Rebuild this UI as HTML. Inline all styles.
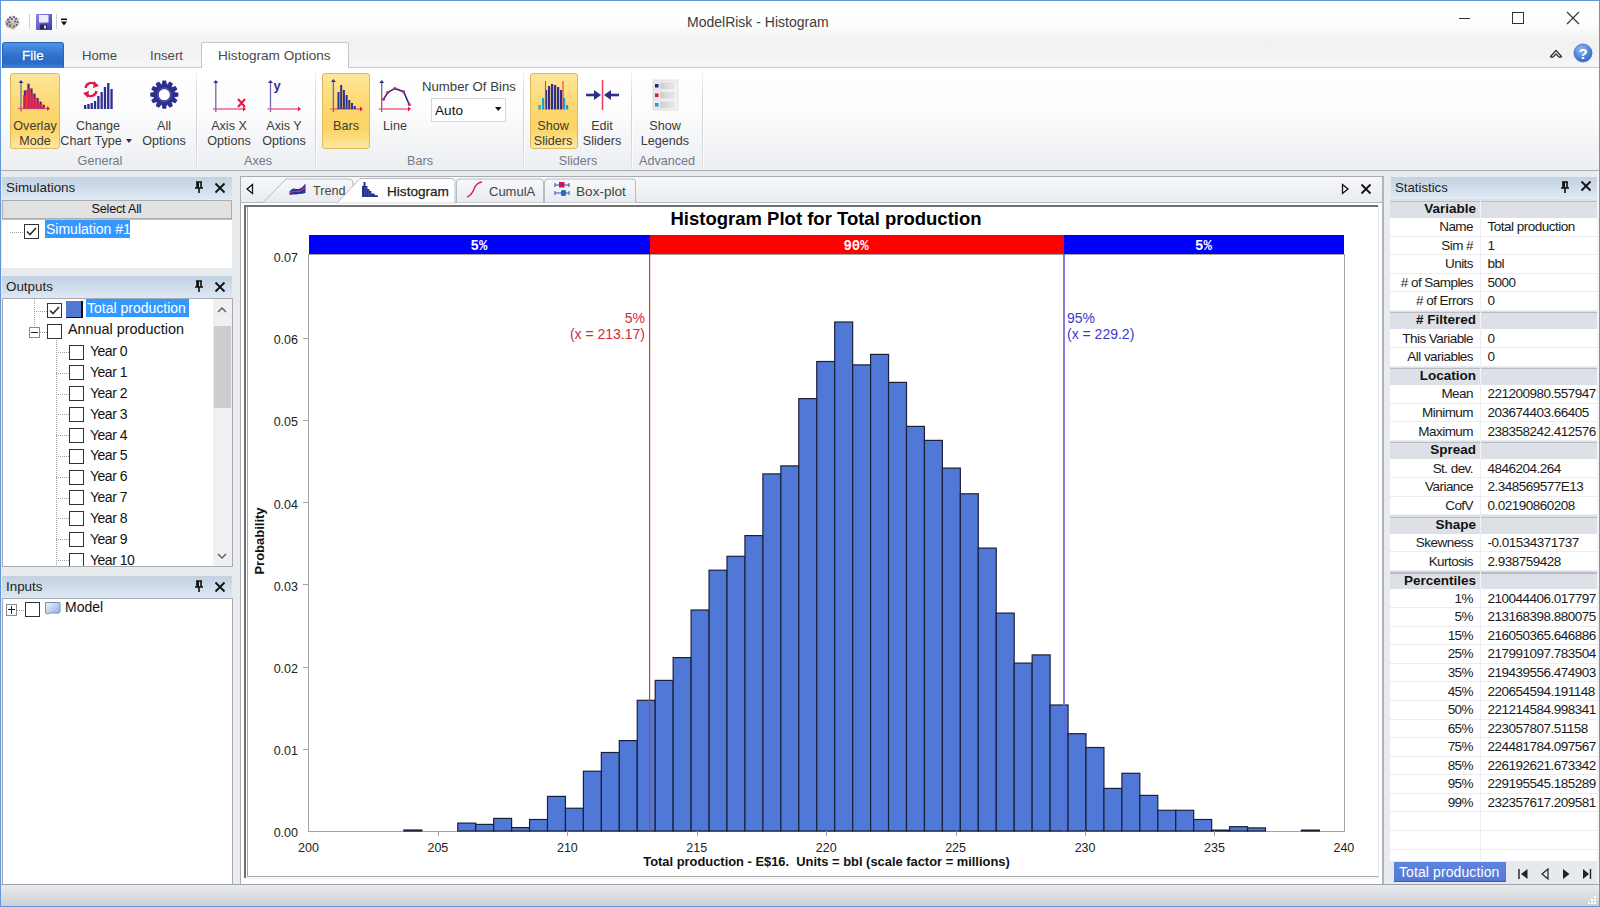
<!DOCTYPE html>
<html><head><meta charset="utf-8"><title>ModelRisk - Histogram</title><style>
*{margin:0;padding:0;box-sizing:border-box}
html,body{width:1600px;height:907px;overflow:hidden;background:#fff;font-family:"Liberation Sans",sans-serif;}
.a{position:absolute}
.t{position:absolute;white-space:nowrap;line-height:1}
</style></head><body>
<div class="a" style="left:0px;top:0px;width:1600px;height:68px;background:linear-gradient(#ffffff 0px,#ffffff 20px,#f1f1f1 44px,#f3f3f3 58px,#f7f7f7 67px)"></div>
<div class="a" style="left:0px;top:68px;width:1600px;height:103px;background:linear-gradient(#ffffff 0px,#fdfdfd 40px,#eceef2 102px)"></div>
<div class="a" style="left:0px;top:67px;width:1600px;height:1px;background:#c6cacf"></div>
<div class="a" style="left:0px;top:170px;width:1600px;height:1px;background:#a9acb1"></div>
<div class="a" style="left:0px;top:171px;width:1600px;height:714px;background:#e9ecef"></div>
<div class="a" style="left:0px;top:884px;width:1600px;height:1px;background:#9ea2a8"></div>
<div class="a" style="left:0px;top:885px;width:1600px;height:21px;background:linear-gradient(#e9ebee,#cdd0d5)"></div>
<div class="a" style="left:0px;top:0px;width:1600px;height:1px;background:#6496da"></div>
<div class="a" style="left:0px;top:0px;width:1px;height:907px;background:#6496da"></div>
<div class="a" style="left:1599px;top:0px;width:1px;height:907px;background:#6496da"></div>
<div class="a" style="left:0px;top:906px;width:1600px;height:1px;background:#6496da"></div>
<div class="t" style="left:687px;top:15px;font-size:14px;color:#3c3c3c">ModelRisk - Histogram</div>
<svg class="a" style="left:3px;top:13px" width="18" height="18" viewBox="0 0 18 18">
<path d="M2 8 L8 2.5 L15.5 5 L16.5 11 L11 16.5 L3.5 14 Z" fill="#c9c5a3"/>
<path d="M8 2.5 L15.5 5 L16.5 11 L9 9 Z" fill="#d9d5b8"/><path d="M2 8 L9 9 L11 16.5 L3.5 14 Z" fill="#b5b190"/>
<g fill="#4a44c8"><circle cx="5" cy="6.5" r="1"/><circle cx="7" cy="4.5" r="1"/><circle cx="9" cy="6" r="1"/><circle cx="11" cy="4" r="1"/><circle cx="13" cy="6" r="1"/><circle cx="12" cy="8.5" r="1"/><circle cx="14.5" cy="9" r="1"/><circle cx="4" cy="11" r="0.9"/><circle cx="7" cy="12.5" r="0.9"/><circle cx="13.5" cy="12" r="0.9"/><circle cx="11" cy="13.5" r="0.9"/><circle cx="6" cy="9" r="0.9"/></g>
</svg>
<div class="a" style="left:29px;top:14px;width:1px;height:15px;background:#d0d0d0"></div>
<svg class="a" style="left:35px;top:13px" width="18" height="18" viewBox="0 0 18 18">
<defs><linearGradient id="sv" x1="0" y1="0" x2="1" y2="1"><stop offset="0" stop-color="#8c86f0"/><stop offset="1" stop-color="#3c36b0"/></linearGradient></defs>
<rect x="1" y="1" width="16" height="16" fill="url(#sv)"/>
<rect x="4" y="2" width="9.5" height="7.5" fill="#eceefa"/>
<rect x="5" y="11.5" width="7" height="5" fill="#27255f"/><rect x="9" y="12.5" width="2" height="3" fill="#dcdcf0"/>
</svg>
<div class="a" style="left:56px;top:14px;width:1px;height:15px;background:#d0d0d0"></div>
<svg class="a" style="left:60px;top:17px" width="8" height="10" viewBox="0 0 8 10">
<rect x="1" y="1.5" width="6" height="1.6" fill="#111"/><path d="M1 4.5 L7 4.5 L4 8.5 Z" fill="#111"/></svg>
<div class="a" style="left:1459px;top:18px;width:11px;height:1px;background:#333"></div>
<div class="a" style="left:1512px;top:12px;width:12px;height:12px;border:1px solid #333"></div>
<svg class="a" style="left:1566px;top:11px" width="14" height="14" viewBox="0 0 14 14">
<path d="M1 1 L13 13 M13 1 L1 13" stroke="#333" stroke-width="1.1"/></svg>
<div class="a" style="left:2px;top:42px;width:62px;height:26px;background:linear-gradient(#4a95e4,#2d6fcc 55%,#2a6bc7 80%,#3a86dc);border-radius:3px 3px 0 0;border:1px solid #2a64b8;border-bottom:none"></div>
<div class="t" style="left:22px;top:49px;font-size:13.4px;color:#fff;-webkit-text-stroke:0.3px #fff;text-shadow:0 0 2px rgba(0,40,120,0.6)">File</div>
<div class="t" style="left:82px;top:49px;font-size:13.2px;color:#4a4a4a">Home</div>
<div class="t" style="left:150px;top:49px;font-size:13.2px;color:#4a4a4a">Insert</div>
<div class="a" style="left:201px;top:42px;width:148px;height:26px;background:linear-gradient(#ffffff,#ffffff);border:1px solid #c3c7cc;border-bottom:none;border-radius:3px 3px 0 0"></div>
<div class="t" style="left:218px;top:49px;font-size:13.6px;color:#4a4a4a">Histogram Options</div>
<svg class="a" style="left:1548px;top:46px" width="16" height="14" viewBox="0 0 16 14">
<path d="M2.5 10.5 L8 4.5 L13.5 10.5 Q12 12 10.5 10.5 L8 8 L5.5 10.5 Q4 12 2.5 10.5 Z" stroke="#333" stroke-width="1.2" fill="none" stroke-linejoin="round"/></svg>
<svg class="a" style="left:1573px;top:43px" width="20" height="20" viewBox="0 0 20 20">
<defs><radialGradient id="hg" cx="40%" cy="30%" r="70%"><stop offset="0" stop-color="#8fbaf0"/><stop offset="1" stop-color="#2c6ccc"/></radialGradient></defs>
<circle cx="10" cy="10" r="9" fill="url(#hg)" stroke="#3a70c0" stroke-width="0.8"/>
<text x="10" y="15.5" text-anchor="middle" font-family="Liberation Sans" font-weight="bold" font-size="15" fill="#fff">?</text></svg>
<div class="a" style="left:196px;top:72px;width:1px;height:97px;background:linear-gradient(rgba(200,203,208,0.2),#d2d5da 30%,#d2d5da 70%,rgba(200,203,208,0.4))"></div>
<div class="a" style="left:197px;top:72px;width:1px;height:97px;background:rgba(255,255,255,0.8)"></div>
<div class="a" style="left:315px;top:72px;width:1px;height:97px;background:linear-gradient(rgba(200,203,208,0.2),#d2d5da 30%,#d2d5da 70%,rgba(200,203,208,0.4))"></div>
<div class="a" style="left:316px;top:72px;width:1px;height:97px;background:rgba(255,255,255,0.8)"></div>
<div class="a" style="left:523px;top:72px;width:1px;height:97px;background:linear-gradient(rgba(200,203,208,0.2),#d2d5da 30%,#d2d5da 70%,rgba(200,203,208,0.4))"></div>
<div class="a" style="left:524px;top:72px;width:1px;height:97px;background:rgba(255,255,255,0.8)"></div>
<div class="a" style="left:631px;top:72px;width:1px;height:97px;background:linear-gradient(rgba(200,203,208,0.2),#d2d5da 30%,#d2d5da 70%,rgba(200,203,208,0.4))"></div>
<div class="a" style="left:632px;top:72px;width:1px;height:97px;background:rgba(255,255,255,0.8)"></div>
<div class="a" style="left:702px;top:72px;width:1px;height:97px;background:linear-gradient(rgba(200,203,208,0.2),#d2d5da 30%,#d2d5da 70%,rgba(200,203,208,0.4))"></div>
<div class="a" style="left:703px;top:72px;width:1px;height:97px;background:rgba(255,255,255,0.8)"></div>
<div class="a" style="left:10px;top:73px;width:50px;height:76px;background:linear-gradient(#fde59a 0%,#fdd870 45%,#fcd466 75%,#fde9a0 100%);border:1px solid #e0b85a;border-radius:3px"></div>
<div class="a" style="left:322px;top:73px;width:48px;height:76px;background:linear-gradient(#fde59a 0%,#fdd870 45%,#fcd466 75%,#fde9a0 100%);border:1px solid #e0b85a;border-radius:3px"></div>
<div class="a" style="left:530px;top:73px;width:48px;height:76px;background:linear-gradient(#fde59a 0%,#fdd870 45%,#fcd466 75%,#fde9a0 100%);border:1px solid #e0b85a;border-radius:3px"></div>
<div class="t" style="left:-25.0px;top:120px;width:120px;text-align:center;font-size:12.6px;color:#3b3b3b">Overlay</div>
<div class="t" style="left:-25.0px;top:135px;width:120px;text-align:center;font-size:12.6px;color:#3b3b3b">Mode</div>
<div class="t" style="left:38.0px;top:120px;width:120px;text-align:center;font-size:12.6px;color:#3b3b3b">Change</div>
<div class="t" style="left:36.0px;top:135px;width:120px;text-align:center;font-size:12.6px;color:#3b3b3b">Chart Type<span style="display:inline-block;width:0;height:0;border-left:3.5px solid transparent;border-right:3.5px solid transparent;border-top:4px solid #333;margin-left:4px;vertical-align:2px"></span></div>
<div class="t" style="left:104.0px;top:120px;width:120px;text-align:center;font-size:12.6px;color:#3b3b3b">All</div>
<div class="t" style="left:104.0px;top:135px;width:120px;text-align:center;font-size:12.6px;color:#3b3b3b">Options</div>
<div class="t" style="left:169.0px;top:120px;width:120px;text-align:center;font-size:12.6px;color:#3b3b3b">Axis X</div>
<div class="t" style="left:169.0px;top:135px;width:120px;text-align:center;font-size:12.6px;color:#3b3b3b">Options</div>
<div class="t" style="left:224.0px;top:120px;width:120px;text-align:center;font-size:12.6px;color:#3b3b3b">Axis Y</div>
<div class="t" style="left:224.0px;top:135px;width:120px;text-align:center;font-size:12.6px;color:#3b3b3b">Options</div>
<div class="t" style="left:286.0px;top:120px;width:120px;text-align:center;font-size:12.6px;color:#3b3b3b">Bars</div>
<div class="t" style="left:335.0px;top:120px;width:120px;text-align:center;font-size:12.6px;color:#3b3b3b">Line</div>
<div class="t" style="left:493.0px;top:120px;width:120px;text-align:center;font-size:12.6px;color:#3b3b3b">Show</div>
<div class="t" style="left:493.0px;top:135px;width:120px;text-align:center;font-size:12.6px;color:#3b3b3b">Sliders</div>
<div class="t" style="left:542.0px;top:120px;width:120px;text-align:center;font-size:12.6px;color:#3b3b3b">Edit</div>
<div class="t" style="left:542.0px;top:135px;width:120px;text-align:center;font-size:12.6px;color:#3b3b3b">Sliders</div>
<div class="t" style="left:605.0px;top:120px;width:120px;text-align:center;font-size:12.6px;color:#3b3b3b">Show</div>
<div class="t" style="left:605.0px;top:135px;width:120px;text-align:center;font-size:12.6px;color:#3b3b3b">Legends</div>
<div class="t" style="left:40.0px;top:155px;width:120px;text-align:center;font-size:12.6px;color:#6e7a88">General</div>
<div class="t" style="left:198.0px;top:155px;width:120px;text-align:center;font-size:12.6px;color:#6e7a88">Axes</div>
<div class="t" style="left:360.0px;top:155px;width:120px;text-align:center;font-size:12.6px;color:#6e7a88">Bars</div>
<div class="t" style="left:518.0px;top:155px;width:120px;text-align:center;font-size:12.6px;color:#6e7a88">Sliders</div>
<div class="t" style="left:607.0px;top:155px;width:120px;text-align:center;font-size:12.6px;color:#6e7a88">Advanced</div>
<div class="t" style="left:422px;top:80px;font-size:13.2px;color:#3b3b3b">Number Of Bins</div>
<div class="a" style="left:431px;top:98px;width:75px;height:24px;background:#fff;border:1px solid #d5d8dc"></div>
<div class="t" style="left:435px;top:103.5px;font-size:13.6px;color:#111">Auto</div>
<svg class="a" style="left:494.5px;top:106.5px" width="7" height="5" viewBox="0 0 7 5"><path d="M0 0 L6.5 0 L3.25 4 Z" fill="#111"/></svg>
<svg class="a" style="left:0;top:0" width="720" height="172" viewBox="0 0 720 172"><path d="M21 111.5 L21 82" stroke="#6a6aa8" stroke-width="1.3"/><path d="M18.5 83 L21 80 L23.5 83 Z" fill="#2e2f8c"/><path d="M18 108.5 L48 108.5" stroke="#f0507a" stroke-width="1.3"/><path d="M47 106.0 L50 108.5 L47 111.0 Z" fill="#e8174a"/><rect x="23.799999999999997" y="90.5" width="2.2" height="18.0" fill="#2e2f8c"/><rect x="27.4" y="83.7" width="2.2" height="24.799999999999997" fill="#2e2f8c"/><rect x="30.4" y="88.5" width="2.2" height="20.0" fill="#2e2f8c"/><rect x="33.4" y="93.7" width="2.2" height="14.799999999999997" fill="#2e2f8c"/><rect x="36.5" y="98" width="2.2" height="10.5" fill="#2e2f8c"/><rect x="39.5" y="101.6" width="2.2" height="6.900000000000006" fill="#2e2f8c"/><rect x="42.699999999999996" y="104.8" width="2.2" height="3.700000000000003" fill="#2e2f8c"/><path d="M23 108.5 L23 95.3 L25.5 95.3 L25.5 90 L27.5 90 L27.5 87.7 L30.5 87.7 L30.5 92.9 L33.5 92.9 L33.5 97.6 L36.5 97.6 L36.5 101.6 L39.5 101.6 L39.5 104 L42.5 104 L42.5 106.2 L45 106.2 L45 108.5 Z" fill="#e8204a" opacity="0.85"/><rect x="84.0" y="105" width="2.3" height="4" fill="#2e2f8c"/><rect x="87.3" y="104" width="2.3" height="5" fill="#2e2f8c"/><rect x="90.6" y="103" width="2.3" height="6" fill="#2e2f8c"/><rect x="93.9" y="101" width="2.3" height="8" fill="#2e2f8c"/><rect x="97.2" y="96" width="2.3" height="13" fill="#2e2f8c"/><rect x="100.5" y="92" width="2.3" height="17" fill="#2e2f8c"/><rect x="103.8" y="87" width="2.3" height="22" fill="#2e2f8c"/><rect x="107.1" y="83" width="2.3" height="26" fill="#2e2f8c"/><rect x="110.4" y="89" width="2.3" height="20" fill="#2e2f8c"/><path d="M85.5 88 A6 6 0 0 1 96 85" stroke="#e8174a" stroke-width="2.4" fill="none"/><path d="M94 81 L99 86 L93 88 Z" fill="#e8174a"/><path d="M96.5 91 A6 6 0 0 1 86 94" stroke="#e8174a" stroke-width="2.4" fill="none"/><path d="M88 98 L83 93 L89 91 Z" fill="#e8174a"/><polygon points="178.38,92.86 178.38,96.54 174.47,97.30 174.41,97.54 177.41,100.15 175.57,103.33 171.81,102.04 171.64,102.21 172.93,105.97 169.75,107.81 167.14,104.81 166.90,104.87 166.14,108.78 162.46,108.78 161.70,104.87 161.46,104.81 158.85,107.81 155.67,105.97 156.96,102.21 156.79,102.04 153.03,103.33 151.19,100.15 154.19,97.54 154.13,97.30 150.22,96.54 150.22,92.86 154.13,92.10 154.19,91.86 151.19,89.25 153.03,86.07 156.79,87.36 156.96,87.19 155.67,83.43 158.85,81.59 161.46,84.59 161.70,84.53 162.46,80.62 166.14,80.62 166.90,84.53 167.14,84.59 169.75,81.59 172.93,83.43 171.64,87.19 171.81,87.36 175.57,86.07 177.41,89.25 174.41,91.86 174.47,92.10" fill="#2e2f8c"/><circle cx="164.3" cy="94.7" r="5.6" fill="#ffffff"/><circle cx="164.3" cy="94.7" r="6.8" fill="none" stroke="#6b6bb5" stroke-width="0.7"/><path d="M215.8 112 L215.8 82" stroke="#6a6aa8" stroke-width="1.3"/><path d="M213.3 83 L215.8 80 L218.3 83 Z" fill="#2e2f8c"/><path d="M212.8 109 L244 109" stroke="#f0507a" stroke-width="1.3"/><path d="M243 106.5 L246 109 L243 111.5 Z" fill="#e8174a"/><path d="M238 99 L245 107 M245 99 L238 107" stroke="#e8174a" stroke-width="2"/><path d="M270.5 112 L270.5 82" stroke="#6a6aa8" stroke-width="1.3"/><path d="M268.0 83 L270.5 80 L273.0 83 Z" fill="#2e2f8c"/><path d="M267.5 109 L299 109" stroke="#f0507a" stroke-width="1.3"/><path d="M298 106.5 L301 109 L298 111.5 Z" fill="#e8174a"/><text x="277" y="90" font-family="Liberation Sans" font-weight="bold" font-size="13" fill="#2e2f8c" text-anchor="middle">y</text><path d="M333.4 112 L333.4 81" stroke="#6a6aa8" stroke-width="1.3"/><path d="M330.9 82 L333.4 79 L335.9 82 Z" fill="#2e2f8c"/><path d="M330.4 109 L361 109" stroke="#f0507a" stroke-width="1.3"/><path d="M360 106.5 L363 109 L360 111.5 Z" fill="#e8174a"/><rect x="337.5" y="92" width="2" height="17" fill="#2e2f8c"/><rect x="340.2" y="85" width="2" height="24" fill="#2e2f8c"/><rect x="342.9" y="90" width="2" height="19" fill="#2e2f8c"/><rect x="345.6" y="95" width="2" height="14" fill="#2e2f8c"/><rect x="348.3" y="100" width="2" height="9" fill="#2e2f8c"/><rect x="351.0" y="103" width="2" height="6" fill="#2e2f8c"/><rect x="353.7" y="106" width="2" height="3" fill="#2e2f8c"/><path d="M381.7 112 L381.7 82" stroke="#6a6aa8" stroke-width="1.3"/><path d="M379.2 83 L381.7 80 L384.2 83 Z" fill="#2e2f8c"/><path d="M378.7 109 L409 109" stroke="#f0507a" stroke-width="1.3"/><path d="M408 106.5 L411 109 L408 111.5 Z" fill="#e8174a"/><path d="M383.5 99.3 L387.7 92.5 L394.9 88.4 L403.6 91.7 L409.3 104.6" stroke="#2e2f8c" stroke-width="1.6" fill="none"/><circle cx="383.5" cy="99.3" r="1.5" fill="#d02060"/><circle cx="387.7" cy="92.5" r="1.5" fill="#d02060"/><circle cx="394.9" cy="88.4" r="1.5" fill="#d02060"/><circle cx="403.6" cy="91.7" r="1.5" fill="#d02060"/><circle cx="409.3" cy="104.6" r="1.5" fill="#d02060"/><rect x="538.5" y="105" width="2.2" height="4.5" fill="#1aa0d8"/><rect x="542" y="98" width="2.2" height="11.5" fill="#1aa0d8"/><rect x="545" y="90" width="2.2" height="19.5" fill="#2e2f8c"/><rect x="548" y="86" width="2.2" height="23.5" fill="#2e2f8c"/><rect x="551" y="84" width="2.2" height="25.5" fill="#2e2f8c"/><rect x="554" y="85" width="2.2" height="24.5" fill="#2e2f8c"/><rect x="557" y="87" width="2.2" height="22.5" fill="#2e2f8c"/><rect x="560" y="90" width="2.2" height="19.5" fill="#2e2f8c"/><rect x="563" y="98" width="2.2" height="11.5" fill="#1aa0d8"/><rect x="566" y="105" width="2.2" height="4.5" fill="#1aa0d8"/><path d="M545.5 81 L545.5 109 M563 81 L563 109" stroke="#ee3a50" stroke-width="1.1"/><path d="M602.5 80 L602.5 110" stroke="#ee3a6a" stroke-width="1.5"/><path d="M586 95 L597 95" stroke="#2e2f8c" stroke-width="2.6"/><path d="M594 90 L601 95 L594 100 Z" fill="#2e2f8c"/><path d="M619 95 L608 95" stroke="#2e2f8c" stroke-width="2.6"/><path d="M611 90 L604 95 L611 100 Z" fill="#2e2f8c"/><defs><linearGradient id="lg1" x1="0" x2="1"><stop offset="0" stop-color="#e6e6e6"/><stop offset="1" stop-color="#f4f4f4"/></linearGradient><linearGradient id="lg2" x1="0" x2="1"><stop offset="0" stop-color="#cfcfcf"/><stop offset="1" stop-color="#e8e8e8"/></linearGradient></defs><rect x="653" y="80" width="25" height="30" fill="url(#lg1)" stroke="#dadada" stroke-width="0.8"/><rect x="655" y="84.0" width="3.5" height="3.5" fill="#23237a"/><rect x="660" y="82.5" width="15" height="6.5" fill="url(#lg2)"/><rect x="655" y="93.5" width="3.5" height="3.5" fill="#e0104a"/><rect x="660" y="92.0" width="15" height="6.5" fill="url(#lg2)"/><rect x="655" y="103.0" width="3.5" height="3.5" fill="#18a0e0"/><rect x="660" y="101.5" width="15" height="6.5" fill="url(#lg2)"/></svg>
<div class="a" style="left:2px;top:177px;width:230px;height:22px;background:linear-gradient(#c3d1e1 0%,#cfdcea 50%,#dde8f5 100%)"></div>
<div class="t" style="left:6px;top:180.5px;font-size:13.4px;color:#1e1e1e">Simulations</div>
<svg class="a" style="left:192px;top:180px" width="14" height="14" viewBox="0 0 14 14">
<path d="M4 2 L10 2 M5 2 L5 8 M9 2 L9 8 M3 8 L11 8 M7 8 L7 13" stroke="#111" stroke-width="1.6" fill="none"/><rect x="5" y="2" width="2" height="6" fill="#111"/></svg>
<svg class="a" style="left:214px;top:182px" width="12" height="12" viewBox="0 0 12 12">
<path d="M1.5 1.5 L10.5 10.5 M10.5 1.5 L1.5 10.5" stroke="#111" stroke-width="1.8"/></svg>
<div class="a" style="left:2px;top:200px;width:230px;height:19px;background:#e1e1e1;border:1px solid #adadad"></div>
<div class="t" style="left:2px;top:203px;font-size:12.6px;color:#111;letter-spacing:-0.2px"><span style="display:inline-block;width:229px;text-align:center">Select All</span></div>
<div class="a" style="left:2px;top:219px;width:230px;height:1px;background:#bfc3c8"></div>
<div class="a" style="left:2px;top:220px;width:230px;height:48px;background:#fff"></div>
<div class="a" style="left:10px;top:232px;width:14px;height:1px;background:repeating-linear-gradient(90deg,#a0a0a0 0 1px,transparent 1px 2px)"></div>
<div class="a" style="left:24px;top:224px;width:15px;height:15px;background:#fff;border:1px solid #333"></div>
<svg class="a" style="left:24px;top:224px" width="15" height="15" viewBox="0 0 15 15">
<path d="M3 7.5 L6 10.5 L12 4" stroke="#333" stroke-width="1.7" fill="none"/></svg>
<div class="a" style="left:45px;top:220px;width:85px;height:18px;background:#3399ff"></div>
<div class="t" style="left:46px;top:222px;font-size:14px;color:#fff">Simulation #1</div>
<div class="a" style="left:2px;top:276px;width:230px;height:22px;background:linear-gradient(#c3d1e1 0%,#cfdcea 50%,#dde8f5 100%)"></div>
<div class="t" style="left:6px;top:279.5px;font-size:13.4px;color:#1e1e1e">Outputs</div>
<svg class="a" style="left:192px;top:279px" width="14" height="14" viewBox="0 0 14 14">
<path d="M4 2 L10 2 M5 2 L5 8 M9 2 L9 8 M3 8 L11 8 M7 8 L7 13" stroke="#111" stroke-width="1.6" fill="none"/><rect x="5" y="2" width="2" height="6" fill="#111"/></svg>
<svg class="a" style="left:214px;top:281px" width="12" height="12" viewBox="0 0 12 12">
<path d="M1.5 1.5 L10.5 10.5 M10.5 1.5 L1.5 10.5" stroke="#111" stroke-width="1.8"/></svg>
<div class="a" style="left:2px;top:298px;width:231px;height:269px;background:#fff;border:1px solid #a7abb0"></div>
<div class="a" style="left:213px;top:299px;width:19px;height:267px;background:#f0f0f0"></div>
<div class="a" style="left:214px;top:326px;width:17px;height:82px;background:#cdcdcd"></div>
<svg class="a" style="left:216px;top:305px" width="12" height="10" viewBox="0 0 12 10"><path d="M2 7 L6 3 L10 7" stroke="#606060" stroke-width="1.5" fill="none"/></svg>
<svg class="a" style="left:216px;top:551px" width="12" height="10" viewBox="0 0 12 10"><path d="M2 3 L6 7 L10 3" stroke="#606060" stroke-width="1.5" fill="none"/></svg>
<div class="a" style="left:34px;top:299px;width:1px;height:29px;background:repeating-linear-gradient(180deg,#a0a0a0 0 1px,transparent 1px 2px)"></div>
<div class="a" style="left:34px;top:311px;width:13px;height:1px;background:repeating-linear-gradient(90deg,#a0a0a0 0 1px,transparent 1px 2px)"></div>
<div class="a" style="left:47px;top:303px;width:15px;height:15px;background:#fff;border:1px solid #333"></div>
<svg class="a" style="left:47px;top:303px" width="15" height="15" viewBox="0 0 15 15">
<path d="M3 7.5 L6 10.5 L12 4" stroke="#333" stroke-width="1.7" fill="none"/></svg>
<div class="a" style="left:66px;top:301px;width:17px;height:17px;background:#5277d4;border-right:2px solid #111;border-bottom:1px solid #111"></div>
<div class="a" style="left:86px;top:299px;width:103px;height:18px;background:#3399ff"></div>
<div class="t" style="left:87px;top:301px;font-size:14px;color:#fff">Total production</div>
<div class="a" style="left:29px;top:327px;width:11px;height:11px;background:#fff;border:1px solid #8a8a8a"></div>
<div class="a" style="left:31px;top:332px;width:7px;height:1px;background:#222"></div>
<div class="a" style="left:40px;top:332px;width:7px;height:1px;background:repeating-linear-gradient(90deg,#a0a0a0 0 1px,transparent 1px 2px)"></div>
<div class="a" style="left:47px;top:324px;width:15px;height:15px;background:#fff;border:1px solid #333"></div>
<div class="t" style="left:68px;top:322px;font-size:14.4px;color:#111">Annual production</div>
<div class="a" style="left:56px;top:340px;width:1px;height:226px;background:repeating-linear-gradient(180deg,#a0a0a0 0 1px,transparent 1px 2px)"></div>
<div class="a" style="left:56px;top:352px;width:13px;height:1px;background:repeating-linear-gradient(90deg,#a0a0a0 0 1px,transparent 1px 2px)"></div>
<div class="a" style="left:69px;top:345px;width:15px;height:15px;background:#fff;border:1px solid #333"></div>
<div class="t" style="left:90px;top:344px;font-size:14px;color:#111;letter-spacing:-0.5px">Year 0</div>
<div class="a" style="left:56px;top:373px;width:13px;height:1px;background:repeating-linear-gradient(90deg,#a0a0a0 0 1px,transparent 1px 2px)"></div>
<div class="a" style="left:69px;top:365px;width:15px;height:15px;background:#fff;border:1px solid #333"></div>
<div class="t" style="left:90px;top:365px;font-size:14px;color:#111;letter-spacing:-0.5px">Year 1</div>
<div class="a" style="left:56px;top:394px;width:13px;height:1px;background:repeating-linear-gradient(90deg,#a0a0a0 0 1px,transparent 1px 2px)"></div>
<div class="a" style="left:69px;top:386px;width:15px;height:15px;background:#fff;border:1px solid #333"></div>
<div class="t" style="left:90px;top:386px;font-size:14px;color:#111;letter-spacing:-0.5px">Year 2</div>
<div class="a" style="left:56px;top:414px;width:13px;height:1px;background:repeating-linear-gradient(90deg,#a0a0a0 0 1px,transparent 1px 2px)"></div>
<div class="a" style="left:69px;top:407px;width:15px;height:15px;background:#fff;border:1px solid #333"></div>
<div class="t" style="left:90px;top:407px;font-size:14px;color:#111;letter-spacing:-0.5px">Year 3</div>
<div class="a" style="left:56px;top:435px;width:13px;height:1px;background:repeating-linear-gradient(90deg,#a0a0a0 0 1px,transparent 1px 2px)"></div>
<div class="a" style="left:69px;top:428px;width:15px;height:15px;background:#fff;border:1px solid #333"></div>
<div class="t" style="left:90px;top:428px;font-size:14px;color:#111;letter-spacing:-0.5px">Year 4</div>
<div class="a" style="left:56px;top:456px;width:13px;height:1px;background:repeating-linear-gradient(90deg,#a0a0a0 0 1px,transparent 1px 2px)"></div>
<div class="a" style="left:69px;top:449px;width:15px;height:15px;background:#fff;border:1px solid #333"></div>
<div class="t" style="left:90px;top:448px;font-size:14px;color:#111;letter-spacing:-0.5px">Year 5</div>
<div class="a" style="left:56px;top:477px;width:13px;height:1px;background:repeating-linear-gradient(90deg,#a0a0a0 0 1px,transparent 1px 2px)"></div>
<div class="a" style="left:69px;top:470px;width:15px;height:15px;background:#fff;border:1px solid #333"></div>
<div class="t" style="left:90px;top:469px;font-size:14px;color:#111;letter-spacing:-0.5px">Year 6</div>
<div class="a" style="left:56px;top:498px;width:13px;height:1px;background:repeating-linear-gradient(90deg,#a0a0a0 0 1px,transparent 1px 2px)"></div>
<div class="a" style="left:69px;top:490px;width:15px;height:15px;background:#fff;border:1px solid #333"></div>
<div class="t" style="left:90px;top:490px;font-size:14px;color:#111;letter-spacing:-0.5px">Year 7</div>
<div class="a" style="left:56px;top:518px;width:13px;height:1px;background:repeating-linear-gradient(90deg,#a0a0a0 0 1px,transparent 1px 2px)"></div>
<div class="a" style="left:69px;top:511px;width:15px;height:15px;background:#fff;border:1px solid #333"></div>
<div class="t" style="left:90px;top:511px;font-size:14px;color:#111;letter-spacing:-0.5px">Year 8</div>
<div class="a" style="left:56px;top:539px;width:13px;height:1px;background:repeating-linear-gradient(90deg,#a0a0a0 0 1px,transparent 1px 2px)"></div>
<div class="a" style="left:69px;top:532px;width:15px;height:15px;background:#fff;border:1px solid #333"></div>
<div class="t" style="left:90px;top:532px;font-size:14px;color:#111;letter-spacing:-0.5px">Year 9</div>
<div class="a" style="left:56px;top:560px;width:13px;height:1px;background:repeating-linear-gradient(90deg,#a0a0a0 0 1px,transparent 1px 2px)"></div>
<div class="a" style="left:69px;top:553px;width:15px;height:13px;background:#fff;border:1px solid #333;border-bottom:none"></div>
<div class="t" style="left:90px;top:553px;font-size:14px;color:#111;letter-spacing:-0.5px">Year 10</div>
<div class="a" style="left:3px;top:566px;width:229px;height:1px;background:#a7abb0"></div>
<div class="a" style="left:2px;top:576px;width:230px;height:22px;background:linear-gradient(#c3d1e1 0%,#cfdcea 50%,#dde8f5 100%)"></div>
<div class="t" style="left:6px;top:579.5px;font-size:13.4px;color:#1e1e1e">Inputs</div>
<svg class="a" style="left:192px;top:579px" width="14" height="14" viewBox="0 0 14 14">
<path d="M4 2 L10 2 M5 2 L5 8 M9 2 L9 8 M3 8 L11 8 M7 8 L7 13" stroke="#111" stroke-width="1.6" fill="none"/><rect x="5" y="2" width="2" height="6" fill="#111"/></svg>
<svg class="a" style="left:214px;top:581px" width="12" height="12" viewBox="0 0 12 12">
<path d="M1.5 1.5 L10.5 10.5 M10.5 1.5 L1.5 10.5" stroke="#111" stroke-width="1.8"/></svg>
<div class="a" style="left:2px;top:598px;width:231px;height:286px;background:#fff;border:1px solid #a7abb0;border-bottom:none"></div>
<div class="a" style="left:6px;top:604px;width:11px;height:12px;background:#fff;border:1px solid #8a8a8a"></div>
<div class="a" style="left:8px;top:609px;width:7px;height:1px;background:#222"></div>
<div class="a" style="left:11px;top:606px;width:1px;height:8px;background:#222"></div>
<div class="a" style="left:17px;top:610px;width:8px;height:1px;background:repeating-linear-gradient(90deg,#a0a0a0 0 1px,transparent 1px 2px)"></div>
<div class="a" style="left:25px;top:602px;width:15px;height:15px;background:#fff;border:1px solid #333"></div>
<svg class="a" style="left:44px;top:601px" width="18" height="16" viewBox="0 0 18 16">
<defs><linearGradient id="mg" x1="0" y1="0" x2="1" y2="1"><stop offset="0" stop-color="#eef4fb"/><stop offset="1" stop-color="#8fb0d8"/></linearGradient></defs>
<path d="M1.5 1.5 L16 1.5 L16 11 Q14 13 12 12 L6 12 Q4 14 1.5 12 Z" fill="url(#mg)" stroke="#6f93c4" stroke-width="1"/></svg>
<div class="t" style="left:65px;top:600px;font-size:14px;color:#111">Model</div>
<div class="a" style="left:240px;top:176px;width:1144px;height:708px;background:#fff;border:1px solid #a9adb3;border-right:2px solid #b1b4b9;border-bottom:none"></div>
<div class="a" style="left:241px;top:177px;width:1141px;height:25px;background:linear-gradient(#f6f7f9,#e9ecf0)"></div>
<div class="a" style="left:241px;top:202px;width:1141px;height:1px;background:#b4b8be"></div>
<svg class="a" style="left:245px;top:183px" width="10" height="12" viewBox="0 0 10 12"><path d="M7.5 1.5 L2 6 L7.5 10.5 Z" fill="none" stroke="#111" stroke-width="1.3"/></svg>
<svg class="a" style="left:1340px;top:183px" width="10" height="12" viewBox="0 0 10 12"><path d="M2.5 1.5 L8 6 L2.5 10.5 Z" fill="none" stroke="#111" stroke-width="1.3"/></svg>
<svg class="a" style="left:1360px;top:183px" width="12" height="12" viewBox="0 0 12 12"><path d="M1.5 1.5 L10.5 10.5 M10.5 1.5 L1.5 10.5" stroke="#111" stroke-width="1.8"/></svg>
<svg class="a" style="left:240px;top:176px" width="420" height="28" viewBox="240 176 420 28"><defs><linearGradient id="tg" x1="0" y1="0" x2="0" y2="1"><stop offset="0" stop-color="#f7f8fa"/><stop offset="1" stop-color="#e8ebef"/></linearGradient></defs><path d="M544.5 202.5 L544.5 182 Q544.5 179 548 179 L632 179 Q635.5 179 635.5 182 L635.5 202.5" fill="url(#tg)" stroke="#b8bcc2"/><path d="M456.5 202.5 L456.5 182 Q456.5 179 460 179 L540 179 Q543.5 179 543.5 182 L543.5 202.5" fill="url(#tg)" stroke="#b8bcc2"/><path d="M263 202.5 L286 179 L349 179 Q353 179 353 183 L353 202.5" fill="url(#tg)" stroke="#b8bcc2"/><path d="M337 203 L360 178.5 L451 178.5 Q455 178.5 455 182 L455 203 Z" fill="#ffffff" stroke="#b8bcc2"/><path d="M338 203 L454.5 203" stroke="#ffffff" stroke-width="1.2"/><path d="M289.5 191.5 Q292 188 294.5 188.5 Q297 189.5 300 188.5 Q303 187 305.5 183.5 L305.5 193 Q302 194 299 194 Q296 194.5 293 194.5 Q291 194.5 289.5 195 Z" fill="#26359a"/><path d="M290 193 Q293 190.5 296 191.5 Q300 192 305 187.5" stroke="#c8347a" stroke-width="1.1" fill="none"/><path d="M362 197 L362 186 L363.5 186 L363.5 182 L365.5 182 L365.5 186 L367.5 186 L367.5 189 L369.5 189 L369.5 191 L371.5 191 L371.5 193.5 L374.5 193.5 L374.5 195 L378 195.5 L378 197 Z" fill="#24308f"/><path d="M364.5 187 L364.5 197 M366.5 187 L366.5 197 M368.5 190 L368.5 197 M370.5 192 L370.5 197" stroke="#5a64b0" stroke-width="0.5"/><path d="M467 197 Q472 195 474 189 Q476 183 482 182" stroke="#e02050" stroke-width="1.4" fill="none"/><rect x="559" y="182" width="5.5" height="5.5" fill="#e0104a"/><path d="M555 185 L569 185 M555 193 L569 193" stroke="#3a4aa8" stroke-width="1"/><rect x="561" y="190" width="5" height="6" rx="1.5" fill="#1a6fc0"/><path d="M555 183 L555 187 M569 183 L569 187 M555 191 L555 195 M569 191 L569 195" stroke="#3a4aa8" stroke-width="1"/></svg>
<div class="t" style="left:313px;top:185px;font-size:12.6px;color:#444">Trend</div>
<div class="t" style="left:387px;top:185px;font-size:13.6px;color:#222;font-weight:normal;-webkit-text-stroke:0.25px #222">Histogram</div>
<div class="t" style="left:489px;top:185px;font-size:13px;color:#444">CumulA</div>
<div class="t" style="left:576px;top:185px;font-size:13.6px;color:#444">Box-plot</div>
<div class="a" style="left:244px;top:205px;width:1134px;height:2px;background:#707070"></div>
<div class="a" style="left:244px;top:205px;width:2px;height:673px;background:#707070"></div>
<div class="a" style="left:247px;top:207px;width:1px;height:669px;background:#a4a4a4"></div>
<div class="a" style="left:247px;top:876px;width:1131px;height:1px;background:#a4a4a4"></div>
<div class="a" style="left:245px;top:878px;width:1134px;height:1px;background:#ececec"></div>
<div class="a" style="left:1378px;top:205px;width:1px;height:674px;background:#e6e6e6"></div>
<div class="a" style="left:1391px;top:177px;width:206px;height:21px;background:linear-gradient(#c3d1e1 0%,#cfdcea 50%,#dde8f5 100%)"></div>
<div class="t" style="left:1395px;top:181px;font-size:13.2px;color:#1e1e1e">Statistics</div>
<svg class="a" style="left:1558px;top:180px" width="14" height="14" viewBox="0 0 14 14">
<path d="M4 2 L10 2 M5 2 L5 8 M9 2 L9 8 M3 8 L11 8 M7 8 L7 13" stroke="#111" stroke-width="1.6" fill="none"/><rect x="5" y="2" width="2" height="6" fill="#111"/></svg>
<svg class="a" style="left:1580px;top:180px" width="12" height="12" viewBox="0 0 12 12">
<path d="M1.5 1.5 L10.5 10.5 M10.5 1.5 L1.5 10.5" stroke="#111" stroke-width="1.8"/></svg>
<div class="a" style="left:1597px;top:171px;width:2px;height:714px;background:#f2f3f5"></div>
<div class="a" style="left:1390px;top:199px;width:207px;height:662px;background:#fff"></div>
<div class="a" style="left:1390px;top:199.40px;width:207px;height:18.58px;background:#dde1e7"></div><div class="a" style="left:1390px;top:200.80px;width:207px;height:1.2px;background:#b9bec6"></div><div class="t" style="left:1390px;top:202.00px;width:86px;text-align:right;font-size:13.5px;font-weight:bold;color:#111">Variable</div><div class="a" style="left:1390px;top:235.55px;width:207px;height:1px;background:#ebedf0"></div><div class="t" style="left:1390px;top:220.18px;width:83px;text-align:right;font-size:13.5px;letter-spacing:-0.55px;color:#1a1a1a">Name</div><div class="t" style="left:1487.5px;top:220.18px;font-size:13.5px;letter-spacing:-0.5px;color:#1a1a1a">Total production</div><div class="a" style="left:1390px;top:254.13px;width:207px;height:1px;background:#ebedf0"></div><div class="t" style="left:1390px;top:238.75px;width:83px;text-align:right;font-size:13.5px;letter-spacing:-0.55px;color:#1a1a1a">Sim #</div><div class="t" style="left:1487.5px;top:238.75px;font-size:13.5px;letter-spacing:-0.5px;color:#1a1a1a">1</div><div class="a" style="left:1390px;top:272.70px;width:207px;height:1px;background:#ebedf0"></div><div class="t" style="left:1390px;top:257.33px;width:83px;text-align:right;font-size:13.5px;letter-spacing:-0.55px;color:#1a1a1a">Units</div><div class="t" style="left:1487.5px;top:257.33px;font-size:13.5px;letter-spacing:-0.5px;color:#1a1a1a">bbl</div><div class="a" style="left:1390px;top:291.28px;width:207px;height:1px;background:#ebedf0"></div><div class="t" style="left:1390px;top:275.90px;width:83px;text-align:right;font-size:13.5px;letter-spacing:-0.55px;color:#1a1a1a"># of Samples</div><div class="t" style="left:1487.5px;top:275.90px;font-size:13.5px;letter-spacing:-0.5px;color:#1a1a1a">5000</div><div class="a" style="left:1390px;top:309.86px;width:207px;height:1px;background:#ebedf0"></div><div class="t" style="left:1390px;top:294.48px;width:83px;text-align:right;font-size:13.5px;letter-spacing:-0.55px;color:#1a1a1a"># of Errors</div><div class="t" style="left:1487.5px;top:294.48px;font-size:13.5px;letter-spacing:-0.5px;color:#1a1a1a">0</div><div class="a" style="left:1390px;top:310.86px;width:207px;height:18.58px;background:#dde1e7"></div><div class="a" style="left:1390px;top:312.26px;width:207px;height:1.2px;background:#b9bec6"></div><div class="t" style="left:1390px;top:313.46px;width:86px;text-align:right;font-size:13.5px;font-weight:bold;color:#111"># Filtered</div><div class="a" style="left:1390px;top:347.01px;width:207px;height:1px;background:#ebedf0"></div><div class="t" style="left:1390px;top:331.63px;width:83px;text-align:right;font-size:13.5px;letter-spacing:-0.55px;color:#1a1a1a">This Variable</div><div class="t" style="left:1487.5px;top:331.63px;font-size:13.5px;letter-spacing:-0.5px;color:#1a1a1a">0</div><div class="a" style="left:1390px;top:365.58px;width:207px;height:1px;background:#ebedf0"></div><div class="t" style="left:1390px;top:350.21px;width:83px;text-align:right;font-size:13.5px;letter-spacing:-0.55px;color:#1a1a1a">All variables</div><div class="t" style="left:1487.5px;top:350.21px;font-size:13.5px;letter-spacing:-0.5px;color:#1a1a1a">0</div><div class="a" style="left:1390px;top:366.58px;width:207px;height:18.58px;background:#dde1e7"></div><div class="a" style="left:1390px;top:367.98px;width:207px;height:1.2px;background:#b9bec6"></div><div class="t" style="left:1390px;top:369.18px;width:86px;text-align:right;font-size:13.5px;font-weight:bold;color:#111">Location</div><div class="a" style="left:1390px;top:402.74px;width:207px;height:1px;background:#ebedf0"></div><div class="t" style="left:1390px;top:387.36px;width:83px;text-align:right;font-size:13.5px;letter-spacing:-0.55px;color:#1a1a1a">Mean</div><div class="t" style="left:1487.5px;top:387.36px;font-size:13.5px;letter-spacing:-0.5px;color:#1a1a1a">221200980.557947</div><div class="a" style="left:1390px;top:421.31px;width:207px;height:1px;background:#ebedf0"></div><div class="t" style="left:1390px;top:405.94px;width:83px;text-align:right;font-size:13.5px;letter-spacing:-0.55px;color:#1a1a1a">Minimum</div><div class="t" style="left:1487.5px;top:405.94px;font-size:13.5px;letter-spacing:-0.5px;color:#1a1a1a">203674403.66405</div><div class="a" style="left:1390px;top:439.89px;width:207px;height:1px;background:#ebedf0"></div><div class="t" style="left:1390px;top:424.51px;width:83px;text-align:right;font-size:13.5px;letter-spacing:-0.55px;color:#1a1a1a">Maximum</div><div class="t" style="left:1487.5px;top:424.51px;font-size:13.5px;letter-spacing:-0.5px;color:#1a1a1a">238358242.412576</div><div class="a" style="left:1390px;top:440.89px;width:207px;height:18.58px;background:#dde1e7"></div><div class="a" style="left:1390px;top:442.29px;width:207px;height:1.2px;background:#b9bec6"></div><div class="t" style="left:1390px;top:443.49px;width:86px;text-align:right;font-size:13.5px;font-weight:bold;color:#111">Spread</div><div class="a" style="left:1390px;top:477.04px;width:207px;height:1px;background:#ebedf0"></div><div class="t" style="left:1390px;top:461.66px;width:83px;text-align:right;font-size:13.5px;letter-spacing:-0.55px;color:#1a1a1a">St. dev.</div><div class="t" style="left:1487.5px;top:461.66px;font-size:13.5px;letter-spacing:-0.5px;color:#1a1a1a">4846204.264</div><div class="a" style="left:1390px;top:495.62px;width:207px;height:1px;background:#ebedf0"></div><div class="t" style="left:1390px;top:480.24px;width:83px;text-align:right;font-size:13.5px;letter-spacing:-0.55px;color:#1a1a1a">Variance</div><div class="t" style="left:1487.5px;top:480.24px;font-size:13.5px;letter-spacing:-0.5px;color:#1a1a1a">2.348569577E13</div><div class="a" style="left:1390px;top:514.19px;width:207px;height:1px;background:#ebedf0"></div><div class="t" style="left:1390px;top:498.82px;width:83px;text-align:right;font-size:13.5px;letter-spacing:-0.55px;color:#1a1a1a">CofV</div><div class="t" style="left:1487.5px;top:498.82px;font-size:13.5px;letter-spacing:-0.5px;color:#1a1a1a">0.02190860208</div><div class="a" style="left:1390px;top:515.19px;width:207px;height:18.58px;background:#dde1e7"></div><div class="a" style="left:1390px;top:516.59px;width:207px;height:1.2px;background:#b9bec6"></div><div class="t" style="left:1390px;top:517.79px;width:86px;text-align:right;font-size:13.5px;font-weight:bold;color:#111">Shape</div><div class="a" style="left:1390px;top:551.34px;width:207px;height:1px;background:#ebedf0"></div><div class="t" style="left:1390px;top:535.97px;width:83px;text-align:right;font-size:13.5px;letter-spacing:-0.55px;color:#1a1a1a">Skewness</div><div class="t" style="left:1487.5px;top:535.97px;font-size:13.5px;letter-spacing:-0.5px;color:#1a1a1a">-0.01534371737</div><div class="a" style="left:1390px;top:569.92px;width:207px;height:1px;background:#ebedf0"></div><div class="t" style="left:1390px;top:554.54px;width:83px;text-align:right;font-size:13.5px;letter-spacing:-0.55px;color:#1a1a1a">Kurtosis</div><div class="t" style="left:1487.5px;top:554.54px;font-size:13.5px;letter-spacing:-0.5px;color:#1a1a1a">2.938759428</div><div class="a" style="left:1390px;top:570.92px;width:207px;height:18.58px;background:#dde1e7"></div><div class="a" style="left:1390px;top:572.32px;width:207px;height:1.2px;background:#b9bec6"></div><div class="t" style="left:1390px;top:573.52px;width:86px;text-align:right;font-size:13.5px;font-weight:bold;color:#111">Percentiles</div><div class="a" style="left:1390px;top:607.07px;width:207px;height:1px;background:#ebedf0"></div><div class="t" style="left:1390px;top:591.70px;width:83px;text-align:right;font-size:13.5px;letter-spacing:-0.55px;color:#1a1a1a">1%</div><div class="t" style="left:1487.5px;top:591.70px;font-size:13.5px;letter-spacing:-0.5px;color:#1a1a1a">210044406.017797</div><div class="a" style="left:1390px;top:625.65px;width:207px;height:1px;background:#ebedf0"></div><div class="t" style="left:1390px;top:610.27px;width:83px;text-align:right;font-size:13.5px;letter-spacing:-0.55px;color:#1a1a1a">5%</div><div class="t" style="left:1487.5px;top:610.27px;font-size:13.5px;letter-spacing:-0.5px;color:#1a1a1a">213168398.880075</div><div class="a" style="left:1390px;top:644.22px;width:207px;height:1px;background:#ebedf0"></div><div class="t" style="left:1390px;top:628.85px;width:83px;text-align:right;font-size:13.5px;letter-spacing:-0.55px;color:#1a1a1a">15%</div><div class="t" style="left:1487.5px;top:628.85px;font-size:13.5px;letter-spacing:-0.5px;color:#1a1a1a">216050365.646886</div><div class="a" style="left:1390px;top:662.80px;width:207px;height:1px;background:#ebedf0"></div><div class="t" style="left:1390px;top:647.42px;width:83px;text-align:right;font-size:13.5px;letter-spacing:-0.55px;color:#1a1a1a">25%</div><div class="t" style="left:1487.5px;top:647.42px;font-size:13.5px;letter-spacing:-0.5px;color:#1a1a1a">217991097.783504</div><div class="a" style="left:1390px;top:681.38px;width:207px;height:1px;background:#ebedf0"></div><div class="t" style="left:1390px;top:666.00px;width:83px;text-align:right;font-size:13.5px;letter-spacing:-0.55px;color:#1a1a1a">35%</div><div class="t" style="left:1487.5px;top:666.00px;font-size:13.5px;letter-spacing:-0.5px;color:#1a1a1a">219439556.474903</div><div class="a" style="left:1390px;top:699.95px;width:207px;height:1px;background:#ebedf0"></div><div class="t" style="left:1390px;top:684.58px;width:83px;text-align:right;font-size:13.5px;letter-spacing:-0.55px;color:#1a1a1a">45%</div><div class="t" style="left:1487.5px;top:684.58px;font-size:13.5px;letter-spacing:-0.5px;color:#1a1a1a">220654594.191148</div><div class="a" style="left:1390px;top:718.53px;width:207px;height:1px;background:#ebedf0"></div><div class="t" style="left:1390px;top:703.15px;width:83px;text-align:right;font-size:13.5px;letter-spacing:-0.55px;color:#1a1a1a">50%</div><div class="t" style="left:1487.5px;top:703.15px;font-size:13.5px;letter-spacing:-0.5px;color:#1a1a1a">221214584.998341</div><div class="a" style="left:1390px;top:737.10px;width:207px;height:1px;background:#ebedf0"></div><div class="t" style="left:1390px;top:721.73px;width:83px;text-align:right;font-size:13.5px;letter-spacing:-0.55px;color:#1a1a1a">65%</div><div class="t" style="left:1487.5px;top:721.73px;font-size:13.5px;letter-spacing:-0.5px;color:#1a1a1a">223057807.51158</div><div class="a" style="left:1390px;top:755.68px;width:207px;height:1px;background:#ebedf0"></div><div class="t" style="left:1390px;top:740.30px;width:83px;text-align:right;font-size:13.5px;letter-spacing:-0.55px;color:#1a1a1a">75%</div><div class="t" style="left:1487.5px;top:740.30px;font-size:13.5px;letter-spacing:-0.5px;color:#1a1a1a">224481784.097567</div><div class="a" style="left:1390px;top:774.26px;width:207px;height:1px;background:#ebedf0"></div><div class="t" style="left:1390px;top:758.88px;width:83px;text-align:right;font-size:13.5px;letter-spacing:-0.55px;color:#1a1a1a">85%</div><div class="t" style="left:1487.5px;top:758.88px;font-size:13.5px;letter-spacing:-0.5px;color:#1a1a1a">226192621.673342</div><div class="a" style="left:1390px;top:792.83px;width:207px;height:1px;background:#ebedf0"></div><div class="t" style="left:1390px;top:777.46px;width:83px;text-align:right;font-size:13.5px;letter-spacing:-0.55px;color:#1a1a1a">95%</div><div class="t" style="left:1487.5px;top:777.46px;font-size:13.5px;letter-spacing:-0.5px;color:#1a1a1a">229195545.185289</div><div class="a" style="left:1390px;top:811.41px;width:207px;height:1px;background:#ebedf0"></div><div class="t" style="left:1390px;top:796.03px;width:83px;text-align:right;font-size:13.5px;letter-spacing:-0.55px;color:#1a1a1a">99%</div><div class="t" style="left:1487.5px;top:796.03px;font-size:13.5px;letter-spacing:-0.5px;color:#1a1a1a">232357617.209581</div><div class="a" style="left:1390px;top:829.98px;width:207px;height:1px;background:#ebedf0"></div><div class="a" style="left:1390px;top:848.56px;width:207px;height:1px;background:#ebedf0"></div><div class="a" style="left:1390px;top:867.14px;width:207px;height:1px;background:#ebedf0"></div>
<div class="a" style="left:1480px;top:219px;width:1px;height:642px;background:#eceef1"></div>
<div class="a" style="left:1480px;top:200.8px;width:1px;height:17.18px;background:#f3f4f6"></div>
<div class="a" style="left:1480px;top:312.26px;width:1px;height:17.18px;background:#f3f4f6"></div>
<div class="a" style="left:1480px;top:367.98px;width:1px;height:17.18px;background:#f3f4f6"></div>
<div class="a" style="left:1480px;top:442.29px;width:1px;height:17.18px;background:#f3f4f6"></div>
<div class="a" style="left:1480px;top:516.59px;width:1px;height:17.18px;background:#f3f4f6"></div>
<div class="a" style="left:1480px;top:572.32px;width:1px;height:17.18px;background:#f3f4f6"></div>
<div class="a" style="left:1390px;top:861px;width:207px;height:23px;background:#e6e9ed"></div>
<div class="a" style="left:1394px;top:862px;width:112px;height:20px;background:linear-gradient(#5d84e0,#5478d6);border-bottom:1px solid #3f5fb0"></div>
<div class="t" style="left:1399px;top:865px;font-size:14px;color:#fff;letter-spacing:0.1px">Total production</div>
<svg class="a" style="left:1510px;top:863.5px" width="87" height="20" viewBox="1510 862 87 20"><path d="M1519 867 L1519 877" stroke="#222" stroke-width="1.4"/><path d="M1527.5 867 L1521 872 L1527.5 877 Z" fill="#222"/><path d="M1548 867 L1542 872 L1548 877 Z" fill="none" stroke="#222" stroke-width="1.2"/><path d="M1563 867 L1569.5 872 L1563 877 Z" fill="#222"/><path d="M1583 867 L1589 872 L1583 877 Z" fill="#222"/><path d="M1590.5 867 L1590.5 877" stroke="#222" stroke-width="1.4"/></svg>
<svg class="a" style="left:1585px;top:895px" width="12" height="12" viewBox="0 0 12 12"><g fill="#ffffff"><rect x="9" y="1" width="2" height="2"/><rect x="6" y="4" width="2" height="2"/><rect x="9" y="4" width="2" height="2"/><rect x="3" y="7" width="2" height="2"/><rect x="6" y="7" width="2" height="2"/><rect x="9" y="7" width="2" height="2"/></g></svg>
<svg class="a" style="left:248px;top:207px" width="1130" height="669" viewBox="248 207 1130 669" font-family="Liberation Sans"><rect x="248" y="207" width="1130" height="669" fill="#ffffff"/><text x="826" y="224.7" text-anchor="middle" font-size="18.5" font-weight="bold" fill="#000">Histogram Plot for Total production</text><rect x="309" y="235" width="341" height="19" fill="#0000ff"/><rect x="650" y="235" width="414" height="19" fill="#ff0000"/><rect x="1064" y="235" width="280" height="19" fill="#0000ff"/><text x="479" y="249.8" text-anchor="middle" font-family="Liberation Mono" font-size="14" font-weight="bold" fill="#ffffff">5%</text><text x="856" y="249.8" text-anchor="middle" font-family="Liberation Mono" font-size="14" font-weight="bold" fill="#ffffff">90%</text><text x="1203.5" y="249.8" text-anchor="middle" font-family="Liberation Mono" font-size="14" font-weight="bold" fill="#ffffff">5%</text><rect x="308.5" y="254.5" width="1036" height="577" fill="none" stroke="#a4a4a4" stroke-width="1"/><g fill="#5078d6" stroke="#1a2038" stroke-width="1.2"><rect x="403.90" y="830.00" width="17.95" height="1.00"/><rect x="457.75" y="823.10" width="17.95" height="7.90"/><rect x="475.70" y="824.40" width="17.95" height="6.60"/><rect x="493.65" y="818.40" width="17.95" height="12.60"/><rect x="511.60" y="827.60" width="17.95" height="3.40"/><rect x="529.55" y="819.50" width="17.95" height="11.50"/><rect x="547.50" y="796.40" width="17.95" height="34.60"/><rect x="565.45" y="808.25" width="17.95" height="22.75"/><rect x="583.40" y="771.20" width="17.95" height="59.80"/><rect x="601.35" y="752.50" width="17.95" height="78.50"/><rect x="619.30" y="740.60" width="17.95" height="90.40"/><rect x="637.25" y="700.30" width="17.95" height="130.70"/><rect x="655.20" y="680.40" width="17.95" height="150.60"/><rect x="673.15" y="657.60" width="17.95" height="173.40"/><rect x="691.10" y="610.00" width="17.95" height="221.00"/><rect x="709.05" y="570.20" width="17.95" height="260.80"/><rect x="727.00" y="556.30" width="17.95" height="274.70"/><rect x="744.95" y="535.60" width="17.95" height="295.40"/><rect x="762.90" y="473.90" width="17.95" height="357.10"/><rect x="780.85" y="465.90" width="17.95" height="365.10"/><rect x="798.80" y="398.60" width="17.95" height="432.40"/><rect x="816.75" y="361.50" width="17.95" height="469.50"/><rect x="834.70" y="322.00" width="17.95" height="509.00"/><rect x="852.65" y="364.90" width="17.95" height="466.10"/><rect x="870.60" y="354.40" width="17.95" height="476.60"/><rect x="888.55" y="382.40" width="17.95" height="448.60"/><rect x="906.50" y="426.40" width="17.95" height="404.60"/><rect x="924.45" y="440.40" width="17.95" height="390.60"/><rect x="942.40" y="468.10" width="17.95" height="362.90"/><rect x="960.35" y="493.80" width="17.95" height="337.20"/><rect x="978.30" y="548.10" width="17.95" height="282.90"/><rect x="996.25" y="613.10" width="17.95" height="217.90"/><rect x="1014.20" y="663.10" width="17.95" height="167.90"/><rect x="1032.15" y="654.90" width="17.95" height="176.10"/><rect x="1050.10" y="705.00" width="17.95" height="126.00"/><rect x="1068.05" y="733.70" width="17.95" height="97.30"/><rect x="1086.00" y="747.50" width="17.95" height="83.50"/><rect x="1103.95" y="788.40" width="17.95" height="42.60"/><rect x="1121.90" y="773.30" width="17.95" height="57.70"/><rect x="1139.85" y="795.40" width="17.95" height="35.60"/><rect x="1157.80" y="810.30" width="17.95" height="20.70"/><rect x="1175.75" y="810.30" width="17.95" height="20.70"/><rect x="1193.70" y="819.50" width="17.95" height="11.50"/><rect x="1211.65" y="830.10" width="17.95" height="0.90"/><rect x="1229.60" y="826.70" width="17.95" height="4.30"/><rect x="1247.55" y="827.90" width="17.95" height="3.10"/><rect x="1301.40" y="830.10" width="17.95" height="0.90"/></g><text x="298" y="837.2" text-anchor="end" font-size="12.5" fill="#222">0.00</text><path d="M303 749.5 L308 749.5" stroke="#a4a4a4" stroke-width="1"/><text x="298" y="755.0" text-anchor="end" font-size="12.5" fill="#222">0.01</text><path d="M303 667.5 L308 667.5" stroke="#a4a4a4" stroke-width="1"/><text x="298" y="672.9" text-anchor="end" font-size="12.5" fill="#222">0.02</text><path d="M303 584.5 L308 584.5" stroke="#a4a4a4" stroke-width="1"/><text x="298" y="590.7" text-anchor="end" font-size="12.5" fill="#222">0.03</text><path d="M303 502.5 L308 502.5" stroke="#a4a4a4" stroke-width="1"/><text x="298" y="508.5" text-anchor="end" font-size="12.5" fill="#222">0.04</text><path d="M303 420.5 L308 420.5" stroke="#a4a4a4" stroke-width="1"/><text x="298" y="426.3" text-anchor="end" font-size="12.5" fill="#222">0.05</text><path d="M303 338.5 L308 338.5" stroke="#a4a4a4" stroke-width="1"/><text x="298" y="344.2" text-anchor="end" font-size="12.5" fill="#222">0.06</text><text x="298" y="262.0" text-anchor="end" font-size="12.5" fill="#222">0.07</text><text x="308.5" y="851.5" text-anchor="middle" font-size="12.5" fill="#222">200</text><path d="M438.5 831 L438.5 836" stroke="#a4a4a4" stroke-width="1"/><text x="437.9" y="851.5" text-anchor="middle" font-size="12.5" fill="#222">205</text><path d="M567.5 831 L567.5 836" stroke="#a4a4a4" stroke-width="1"/><text x="567.4" y="851.5" text-anchor="middle" font-size="12.5" fill="#222">210</text><path d="M697.5 831 L697.5 836" stroke="#a4a4a4" stroke-width="1"/><text x="696.8" y="851.5" text-anchor="middle" font-size="12.5" fill="#222">215</text><path d="M826.5 831 L826.5 836" stroke="#a4a4a4" stroke-width="1"/><text x="826.2" y="851.5" text-anchor="middle" font-size="12.5" fill="#222">220</text><path d="M956.5 831 L956.5 836" stroke="#a4a4a4" stroke-width="1"/><text x="955.6" y="851.5" text-anchor="middle" font-size="12.5" fill="#222">225</text><path d="M1085.5 831 L1085.5 836" stroke="#a4a4a4" stroke-width="1"/><text x="1085.1" y="851.5" text-anchor="middle" font-size="12.5" fill="#222">230</text><path d="M1214.5 831 L1214.5 836" stroke="#a4a4a4" stroke-width="1"/><text x="1214.5" y="851.5" text-anchor="middle" font-size="12.5" fill="#222">235</text><text x="1343.9" y="851.5" text-anchor="middle" font-size="12.5" fill="#222">240</text><text x="826.5" y="865.7" text-anchor="middle" font-size="12.9" font-weight="bold" fill="#111" xml:space="preserve">Total production - E$16.  Units = bbl (scale factor = millions)</text><text transform="translate(263.5 541) rotate(-90)" x="0" y="0" text-anchor="middle" font-size="13" font-weight="bold" fill="#111">Probability</text><path d="M649.6 254 L649.6 831" stroke="#cf3c3c" stroke-width="1.2"/><path d="M1064 254 L1064 831" stroke="#6a6ad6" stroke-width="1.7"/><text x="645" y="322.7" text-anchor="end" font-size="14" fill="#d42a3a">5%</text><text x="645" y="338.5" text-anchor="end" font-size="14" fill="#d42a3a">(x = 213.17)</text><text x="1067" y="322.7" font-size="14" fill="#3a3ad4">95%</text><text x="1067" y="338.5" font-size="14" fill="#3a3ad4">(x = 229.2)</text></svg>
<div class="a" style="left:0px;top:884px;width:1599px;height:1px;background:#9ea2a8"></div>
</body></html>
